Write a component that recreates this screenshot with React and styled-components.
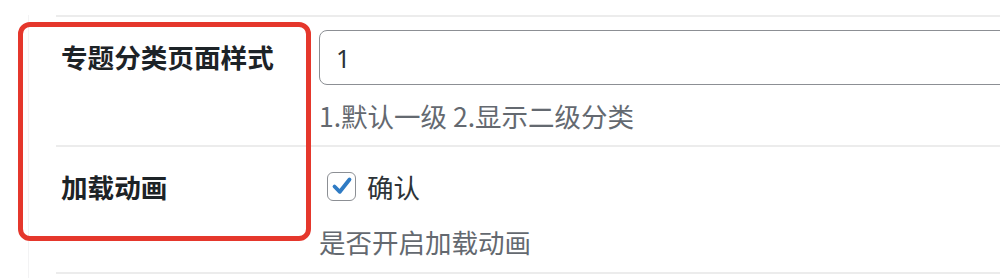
import React, { useState } from "react";
import styled, { createGlobalStyle } from "styled-components";

const GlobalStyle = createGlobalStyle`
  html, body {
    margin: 0;
    padding: 0;
    background: #ffffff;
    overflow: hidden;
  }
  body {
    font-family: "Noto Sans CJK SC", "Noto Sans", sans-serif;
  }
`;

const Page = styled.div`
  position: relative;
  width: 1000px;
  height: 278px;
  overflow: hidden;
  padding-top: 15px;
  box-sizing: border-box;
`;

const Wrap = styled.div`
  margin-left: 28px;
  padding-left: 27px;
  border-left: 1px solid #f3f3f4;
  height: 100%;
`;

const Row = styled.div`
  display: flex;
  border-top: 2px solid #ececec;
  &:last-child {
    border-bottom: 2px solid #ececec;
  }
`;

const Label = styled.div`
  width: 263px;
  flex-shrink: 0;
  box-sizing: border-box;
  padding: 22px 0 0 5px;
  font-size: 26.6px;
  line-height: 36px;
  font-weight: 700;
  color: #1d2327;
`;

const Field = styled.div`
  flex: 1;
  padding: ${(p) => p.pad};
  min-width: 0;
`;

const TextInput = styled.input`
  display: block;
  width: 720px;
  height: 55px;
  box-sizing: border-box;
  border: 1.5px solid #8c8f94;
  border-radius: 8px;
  padding: 0 16px;
  font-family: "Noto Sans", sans-serif;
  font-size: 25px;
  color: #2c3338;
  background: #fff;
  outline: none;
`;

const Desc = styled.p`
  margin: ${(p) => p.margin};
  font-size: 26.5px;
  line-height: 36px;
  color: #646970;
`;

const CheckLine = styled.label`
  display: flex;
  align-items: center;
  height: 52px;
  padding-left: 8px;
  gap: 11px;
  font-size: 26.5px;
  color: #2c3338;
  cursor: pointer;
`;

const Box = styled.span`
  width: 29px;
  height: 29px;
  box-sizing: border-box;
  border: 1.5px solid #8c8f94;
  border-radius: 6px;
  display: flex;
  align-items: center;
  justify-content: center;
  background: #fff;
`;

const Highlight = styled.div`
  position: absolute;
  left: 18px;
  top: 22px;
  width: 293px;
  height: 219px;
  box-sizing: border-box;
  border: 5.5px solid #e5372c;
  border-radius: 12px;
  pointer-events: none;
`;

export default function App() {
  const [style, setStyle] = useState("1");
  const [checked, setChecked] = useState(true);

  return (
    <>
      <GlobalStyle />
      <Page>
        <Wrap>
          <Row>
            <Label>专题分类页面样式</Label>
            <Field pad="13px 0 11px 0">
              <TextInput value={style} onChange={(e) => setStyle(e.target.value)} />
              <Desc margin="13px 0 0 0">1.默认一级 2.显示二级分类</Desc>
            </Field>
          </Row>
          <Row>
            <Label>加载动画</Label>
            <Field pad="13px 0 12px 0">
              <CheckLine onClick={() => setChecked(!checked)}>
                <Box>
                  {checked && (
                    <svg width="24" height="24" viewBox="0 0 24 24">
                      <path
                        d="M4.5 12.5 L9.8 17.8 L19.5 5.5"
                        fill="none"
                        stroke="#2f7bc4"
                        strokeWidth="3.8"
                        strokeLinecap="round"
                        strokeLinejoin="round"
                      />
                    </svg>
                  )}
                </Box>
                确认
              </CheckLine>
              <Desc margin="12px 0 0 0">是否开启加载动画</Desc>
            </Field>
          </Row>
        </Wrap>
        <Highlight />
      </Page>
    </>
  );
}
